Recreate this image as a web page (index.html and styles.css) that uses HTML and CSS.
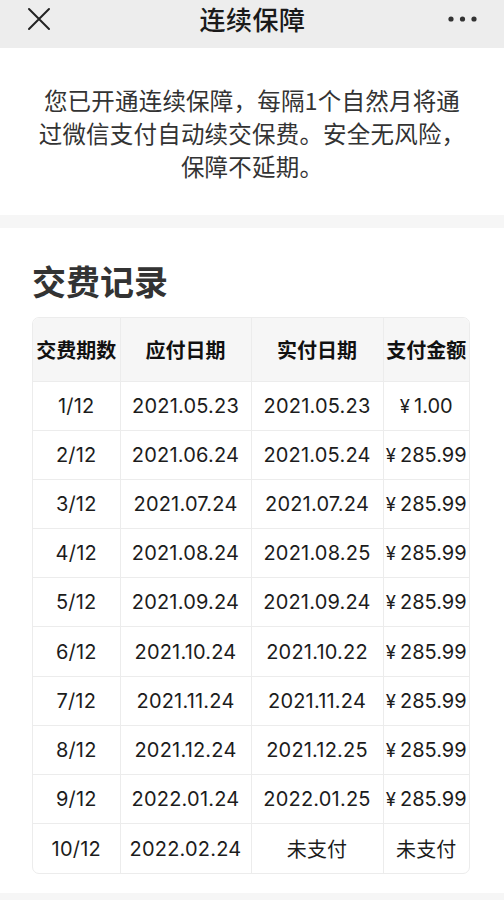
FILE: index.html
```html
<!DOCTYPE html>
<html lang="zh-CN">
<head>
<meta charset="utf-8">
<title>连续保障</title>
<link rel="stylesheet" href="styles.css">
</head>
<body>
<header class="topbar">
  <div class="topbar-row">
    <span class="icon-close">
      <svg width="24" height="24" viewBox="0 0 24 24"><path d="M2 2 L22 22 M22 2 L2 22" stroke="#222" stroke-width="2" fill="none" stroke-linecap="round"/></svg>
    </span>
    <h1 class="topbar-title">连续保障</h1>
    <span class="icon-more">
      <svg width="30" height="8" viewBox="0 0 30 8"><circle cx="3" cy="4" r="2.6" fill="#333"/><circle cx="14.5" cy="4" r="2.6" fill="#333"/><circle cx="26" cy="4" r="2.6" fill="#333"/></svg>
    </span>
  </div>
</header>

<section class="notice">
  <p>您已开通连续保障，每隔1个自然月将通<br>过微信支付自动续交保费。安全无风险，<br>保障不延期。</p>
</section>

<div class="divider"></div>

<section class="records">
  <h2 class="records-title">交费记录</h2>
  <div class="table-wrap">
    <table class="records-table">
      <colgroup>
        <col class="c1"><col class="c2"><col class="c3"><col class="c4">
      </colgroup>
      <thead>
        <tr><th>交费期数</th><th>应付日期</th><th>实付日期</th><th>支付金额</th></tr>
      </thead>
      <tbody>
        <tr><td>1/12</td><td>2021.05.23</td><td>2021.05.23</td><td class="amt"><span class="yen">¥</span>1.00</td></tr>
        <tr><td>2/12</td><td>2021.06.24</td><td>2021.05.24</td><td class="amt"><span class="yen">¥</span>285.99</td></tr>
        <tr><td>3/12</td><td>2021.07.24</td><td>2021.07.24</td><td class="amt"><span class="yen">¥</span>285.99</td></tr>
        <tr><td>4/12</td><td>2021.08.24</td><td>2021.08.25</td><td class="amt"><span class="yen">¥</span>285.99</td></tr>
        <tr><td>5/12</td><td>2021.09.24</td><td>2021.09.24</td><td class="amt"><span class="yen">¥</span>285.99</td></tr>
        <tr><td>6/12</td><td>2021.10.24</td><td>2021.10.22</td><td class="amt"><span class="yen">¥</span>285.99</td></tr>
        <tr><td>7/12</td><td>2021.11.24</td><td>2021.11.24</td><td class="amt"><span class="yen">¥</span>285.99</td></tr>
        <tr><td>8/12</td><td>2021.12.24</td><td>2021.12.25</td><td class="amt"><span class="yen">¥</span>285.99</td></tr>
        <tr><td>9/12</td><td>2022.01.24</td><td>2022.01.25</td><td class="amt"><span class="yen">¥</span>285.99</td></tr>
        <tr><td>10/12</td><td>2022.02.24</td><td>未支付</td><td>未支付</td></tr>
      </tbody>
    </table>
  </div>
</section>

<div class="divider bottom"></div>
</body>
</html>
```

FILE: styles.css
```css
* { box-sizing: border-box; }

html, body {
  margin: 0;
  padding: 0;
  background: #ffffff;
  font-family: "Noto Sans CJK SC", "Noto Sans", sans-serif;
  color: #222;
}

.topbar {
  height: 48px;
  background: #ededed;
}

.topbar-row {
  height: 38px;
  display: flex;
  align-items: center;
  justify-content: space-between;
  padding: 0 26px 0 27px;
}

.icon-close, .icon-more {
  width: 30px;
  display: flex;
  align-items: center;
}

.icon-close svg { display: block; }
.icon-more { justify-content: flex-end; }
.icon-more svg { display: block; }

.topbar-title {
  margin: 0;
  font-size: 26px;
  font-weight: 500;
  color: #1a1a1a;
  line-height: 38px;
  letter-spacing: 0.5px;
}

.notice {
  padding: 36px 16px 32px;
  text-align: center;
}

.notice p {
  margin: 0;
  font-size: 23.5px;
  line-height: 33px;
  color: #333;
  letter-spacing: 0.2px;
}

.divider {
  height: 13px;
  background: #f6f6f6;
}

.divider.bottom {
  height: 8px;
  margin-top: 19px;
}

.records {
  padding: 32px 34px 0 32px;
}

.records-title {
  margin: 0 0 16px;
  font-size: 34px;
  font-weight: 700;
  line-height: 41px;
  color: #333;
}

.table-wrap {
  border: 1px solid #ececec;
  border-radius: 7px;
  overflow: hidden;
}

.records-table {
  width: 100%;
  border-collapse: collapse;
  table-layout: fixed;
}

.records-table col.c1 { width: 87px; }
.records-table col.c2 { width: 131px; }
.records-table col.c3 { width: 132px; }
.records-table col.c4 { width: auto; }

.records-table th,
.records-table td {
  padding: 0;
  text-align: center;
  border-left: 1px solid #ececec;
  border-top: 1px solid #ececec;
  white-space: nowrap;
}

.records-table th:first-child,
.records-table td:first-child { border-left: none; }

.records-table thead th {
  border-top: none;
  height: 63px;
  background: #f6f6f6;
  font-size: 20px;
  font-weight: 700;
  color: #111;
}

.records-table td {
  height: 49.2px;
  font-family: "Inter", "Noto Sans CJK SC", sans-serif;
  font-size: 20px;
  letter-spacing: 0.2px;
  color: #1c1c1c;
}

.records-table td.amt {
  letter-spacing: 0;
}

.yen {
  font-size: 18.5px;
  margin-right: 4px;
}
```
